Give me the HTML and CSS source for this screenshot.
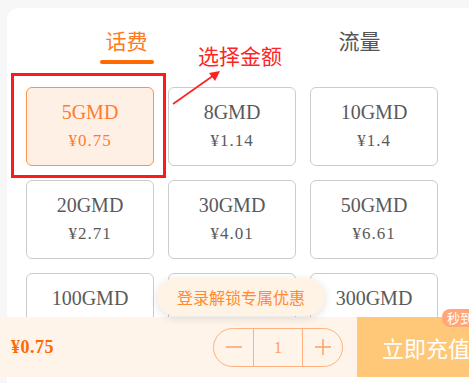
FILE: index.html
```html
<!DOCTYPE html>
<html>
<head>
    <title>话费充值</title>
    <link rel="stylesheet" href="styles.css">
</head>
<body>
    <div class="panel">
        <div class="tabs">
            <div class="tab active">话费</div>
            <div class="tab">流量</div>
        </div>

        <div class="grid">
            <div class="card selected">
                <div class="name">5GMD</div>
                <div class="cost">¥0.75</div>
            </div>
            <div class="card">
                <div class="name">8GMD</div>
                <div class="cost">¥1.14</div>
            </div>
            <div class="card">
                <div class="name">10GMD</div>
                <div class="cost">¥1.4</div>
            </div>
            <div class="card">
                <div class="name">20GMD</div>
                <div class="cost">¥2.71</div>
            </div>
            <div class="card">
                <div class="name">30GMD</div>
                <div class="cost">¥4.01</div>
            </div>
            <div class="card">
                <div class="name">50GMD</div>
                <div class="cost">¥6.61</div>
            </div>
            <div class="card">
                <div class="name">100GMD</div>
                <div class="cost">¥13.21</div>
            </div>
            <div class="card">
                <div class="name">200GMD</div>
                <div class="cost">¥26.41</div>
            </div>
            <div class="card">
                <div class="name">300GMD</div>
                <div class="cost">¥39.61</div>
            </div>
        </div>
    </div>

    <!-- annotation overlay -->
    <div class="mark-box"></div>
    <div class="mark-text">选择金额</div>
    <svg class="mark-arrow" width="60" height="50" viewBox="0 0 60 50">
        <line x1="3" y1="44" x2="47" y2="13" stroke="#ff2020" stroke-width="1.6"/>
        <polygon points="50,11 39,13 45,21" fill="#ff2020"/>
    </svg>

    <div class="toast">登录解锁专属优惠</div>

    <div class="bottom-bar">
        <div class="total">¥0.75</div>
        <div class="stepper">
            <div class="step">
                <svg width="18" height="18" viewBox="0 0 18 18"><line x1="1" y1="9" x2="17" y2="9" stroke="#ffa060" stroke-width="1.5"/></svg>
            </div>
            <div class="qty">1</div>
            <div class="step">
                <svg width="18" height="18" viewBox="0 0 18 18"><line x1="1" y1="9" x2="17" y2="9" stroke="#ffa060" stroke-width="1.5"/><line x1="9" y1="1" x2="9" y2="17" stroke="#ffa060" stroke-width="1.5"/></svg>
            </div>
        </div>
        <div class="pay">
            立即充值
            <span class="badge">秒到账</span>
        </div>
    </div>
</body>
</html>
```

FILE: styles.css
```css
body {
    margin: 0;
    background-color: #f7f7f7;
    font-family: "Noto Sans CJK SC", sans-serif;
    overflow: hidden;
    height: 383px;
    position: relative;
}
.panel {
    margin: 8px 0 0 7px;
    width: 480px;
    height: 375px;
    background-color: white;
    border-radius: 12px 0 0 0;
}
.tabs {
    display: flex;
    justify-content: space-around;
    width: 466px;
    padding-top: 17px;
}
.tab {
    font-size: 21px;
    line-height: 30px;
    color: #555;
    text-align: center;
}
.tab.active {
    color: #ff7a1e;
}
.tab.active::after {
    content: "";
    display: block;
    width: 54px;
    height: 4px;
    border-radius: 2px;
    margin: 5px auto 0;
    background-color: #ff6a00;
}
.grid {
    display: grid;
    grid-template-columns: repeat(3, 128px);
    gap: 14px;
    padding-left: 19px;
    margin-top: 23px;
}
.card {
    height: 79px;
    box-sizing: border-box;
    border: 1px solid #ccc;
    border-radius: 6px;
    display: flex;
    flex-direction: column;
    align-items: center;
    justify-content: center;
    font-family: "Liberation Serif", serif;
    color: #5a5a5a;
}
.card .name {
    font-size: 20px;
    line-height: 26px;
}
.card .cost {
    font-size: 17px;
    line-height: 26px;
    letter-spacing: 1px;
    margin-top: 3px;
}
.card.selected {
    background-color: #fff0e6;
    border-color: #ff9345;
    color: #ff7b30;
}
.mark-box {
    position: absolute;
    left: 11px;
    top: 73px;
    width: 155px;
    height: 105px;
    box-sizing: border-box;
    border: 3px solid #ff1a1a;
}
.mark-text {
    position: absolute;
    left: 198px;
    top: 40px;
    font-size: 21px;
    line-height: 30px;
    color: #ff2424;
}
.mark-arrow {
    position: absolute;
    left: 170px;
    top: 60px;
}
.toast {
    position: absolute;
    left: 157px;
    top: 278px;
    width: 168px;
    height: 38px;
    line-height: 38px;
    border-radius: 19px;
    text-align: center;
    font-size: 16px;
    color: #ff8a30;
    background-color: #fff3e6;
    box-shadow: 0 2px 8px rgba(0,0,0,0.12);
    z-index: 2;
}
.bottom-bar {
    position: absolute;
    left: 0;
    top: 317px;
    width: 487px;
    height: 60px;
    display: flex;
    align-items: center;
    background-color: #fef4ea;
}
.total {
    flex: 1;
    padding-left: 11px;
    font-family: "Liberation Serif", serif;
    font-weight: bold;
    font-size: 18px;
    letter-spacing: 0.5px;
    color: #ff6a00;
}
.stepper {
    display: flex;
    width: 130px;
    height: 39px;
    box-sizing: border-box;
    margin-right: 14px;
    border: 1px solid #ffb27f;
    border-radius: 20px;
}
.step {
    width: 39px;
    display: flex;
    align-items: center;
    justify-content: center;
}
.qty {
    flex: 1;
    border-left: 1px solid #ffb27f;
    border-right: 1px solid #ffb27f;
    text-align: center;
    line-height: 37px;
    font-family: "Liberation Serif", serif;
    font-size: 16px;
    color: #ff9d5c;
}
.pay {
    position: relative;
    width: 130px;
    height: 60px;
    box-sizing: border-box;
    padding-left: 25px;
    line-height: 60px;
    font-size: 22px;
    color: white;
    background-color: #ffc878;
    white-space: nowrap;
}
.badge {
    position: absolute;
    top: -8px;
    left: 85px;
    height: 18px;
    line-height: 18px;
    padding: 0 5px;
    font-size: 13px;
    color: white;
    background-color: #ffa77a;
    border-radius: 8px 0 0 8px;
}
```
